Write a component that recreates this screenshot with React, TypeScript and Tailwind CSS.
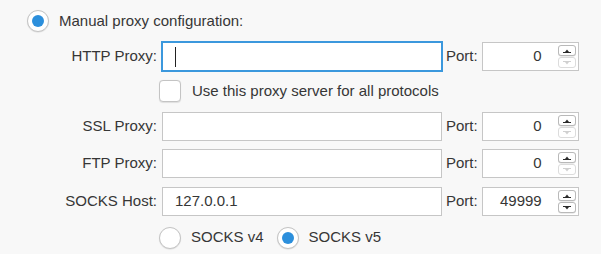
import React from "react";

function Radio({ checked }: { checked?: boolean }) {
  return (
    <span className="flex h-[22px] w-[22px] shrink-0 items-center justify-center rounded-full border border-[#c4c4c4] bg-white shadow-[0_0.5px_1px_rgba(0,0,0,0.12)]">
      {checked && <span className="h-[12px] w-[12px] rounded-full bg-[#2c8fdc]" />}
    </span>
  );
}

function StepBtn({ dir, disabled }: { dir: "up" | "down"; disabled?: boolean }) {
  const color = disabled ? "#d0d0d0" : "#2a2a2a";
  return (
    <span
      className={
        "flex h-[11px] w-[18px] items-center justify-center rounded-[3px] border bg-white " +
        (disabled ? "border-[#dcdcdc]" : "border-[#b9b9b9] shadow-[0_0.5px_0.5px_rgba(0,0,0,0.15)]")
      }
    >
      <svg width="10" height="6" viewBox="0 0 10 6">
        {dir === "up" ? (
          <>
            <polygon points="3,4 5,1.5 7,4" fill={color} />
            <rect x="1" y="4" width="8" height="1" fill={color} />
          </>
        ) : (
          <>
            <rect x="1" y="1" width="8" height="1" fill={color} />
            <polygon points="3,2 5,4.5 7,2" fill={color} />
          </>
        )}
      </svg>
    </span>
  );
}

function ProxyRow({
  label,
  value,
  port,
  focused,
  downDisabled = true,
  className = "",
}: {
  label: string;
  value?: string;
  port: string;
  focused?: boolean;
  downDisabled?: boolean;
  className?: string;
}) {
  return (
    <div className={"flex h-[29px] items-center " + className}>
      <div className="w-[162px] pr-[5px] text-right">{label}</div>
      <div
        className={
          "flex h-[29px] w-[280px] items-center bg-white pl-[12px] " +
          (focused
            ? "border border-[#3b98dd] ring-1 ring-[#3b98dd]"
            : "border border-[#c6c6c6]")
        }
      >
        {focused ? <span className="h-[20px] w-px bg-[#222]" /> : <span>{value}</span>}
      </div>
      <div className="ml-[4px]">Port:</div>
      <div className="ml-[4px] flex h-[29px] w-[97px] items-center border border-[#c6c6c6] bg-white pr-[2px]">
        <span className="flex-1 text-right">{port}</span>
        <span className="ml-[16px] flex flex-col gap-px">
          <StepBtn dir="up" />
          <StepBtn dir="down" disabled={downDisabled} />
        </span>
      </div>
    </div>
  );
}

export default function App() {
  return (
    <div
      className="h-[254px] w-[601px] overflow-hidden bg-[#f8f8f8] pt-[10px] text-[15px] text-[#363636]"
      style={{ fontFamily: '"Liberation Sans", Arial, sans-serif' }}
    >
      <div className="flex h-[22px] items-center pl-[27px]">
        <Radio checked />
        <span className="ml-[10px]">Manual proxy configuration:</span>
      </div>

      <ProxyRow label="HTTP Proxy:" port="0" focused className="mt-[10px]" />

      <div className="mt-[9px] flex h-[22px] items-center pl-[159px]">
        <span className="h-[22px] w-[22px] rounded-[4px] border border-[#c4c4c4] bg-white shadow-[0_0.5px_1px_rgba(0,0,0,0.1)]" />
        <span className="ml-[11px]">Use this proxy server for all protocols</span>
      </div>

      <ProxyRow label="SSL Proxy:" port="0" className="mt-[10px]" />
      <ProxyRow label="FTP Proxy:" port="0" className="mt-[8px]" />
      <ProxyRow
        label="SOCKS Host:"
        value="127.0.0.1"
        port="49999"
        downDisabled={false}
        className="mt-[9px]"
      />

      <div className="mt-[10px] flex h-[23px] items-center pl-[159px]">
        <Radio />
        <span className="ml-[10px]">SOCKS v4</span>
        <span className="ml-[13px]">
          <Radio checked />
        </span>
        <span className="ml-[10px]">SOCKS v5</span>
      </div>
    </div>
  );
}
